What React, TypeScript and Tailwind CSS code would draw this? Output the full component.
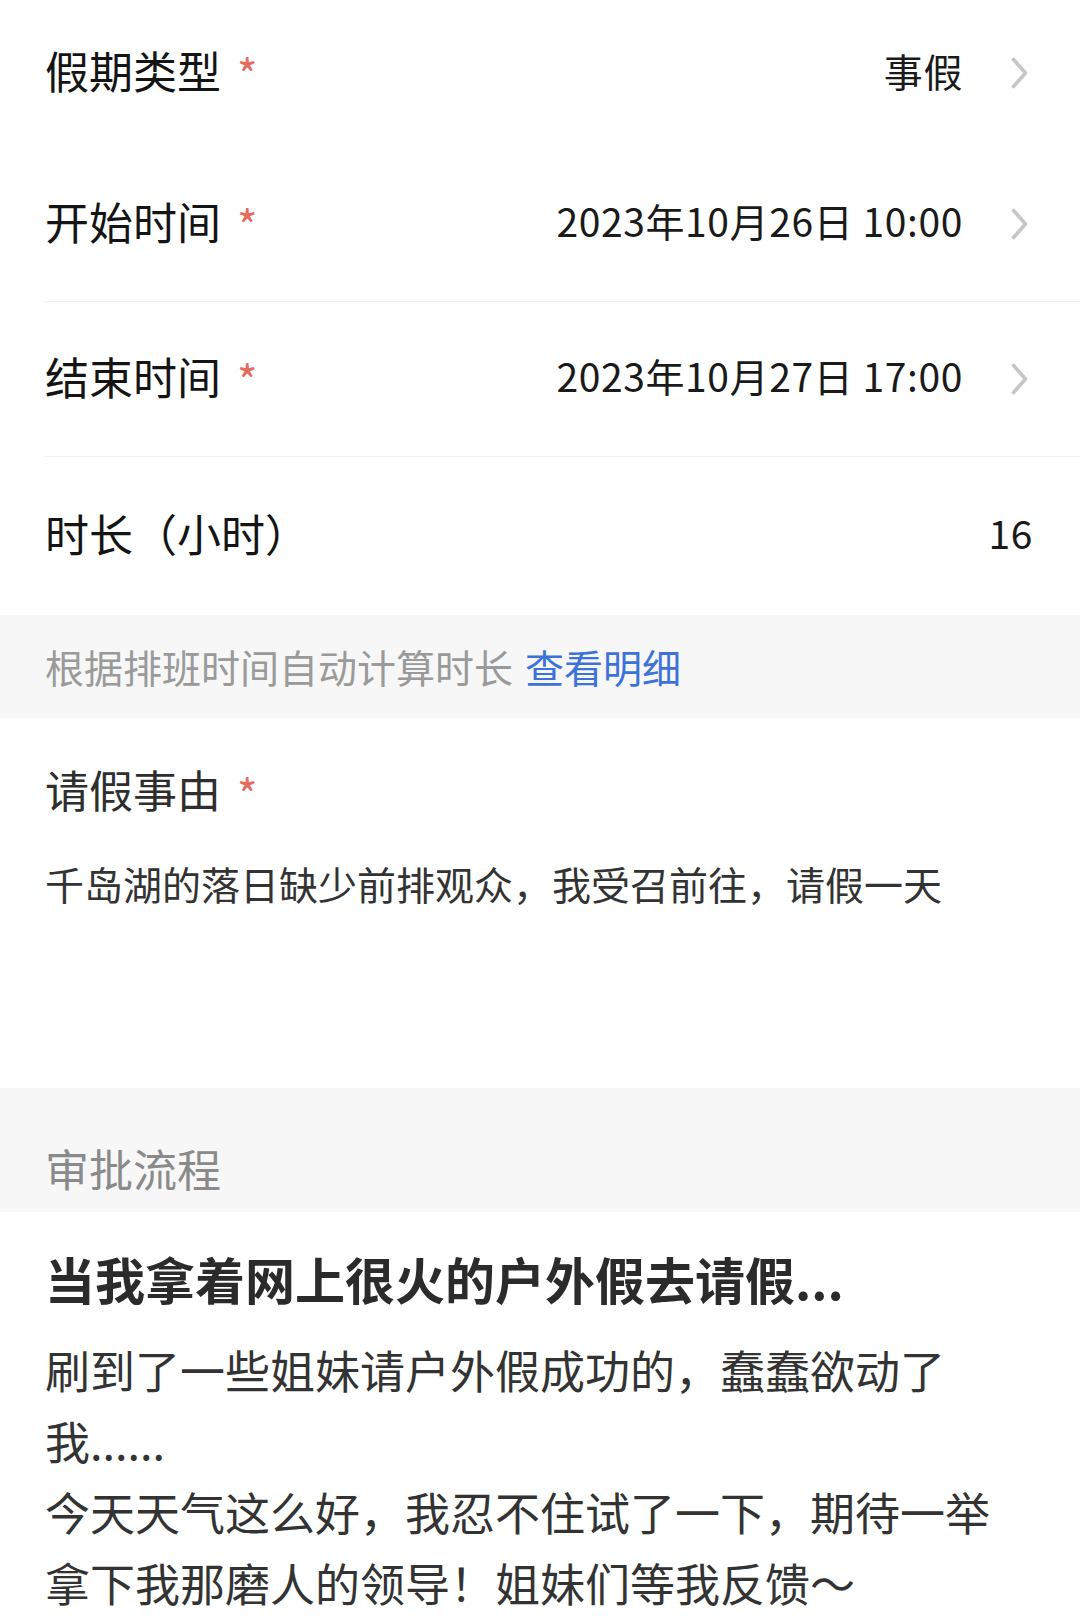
const Chevron = () => (
  <svg width="17" height="32" viewBox="0 0 17 32" fill="none" className="ml-[48px] shrink-0 translate-y-[3px]">
    <polyline points="2.5,2.5 14.5,16 2.5,29.5" stroke="#c6c6c6" strokeWidth="3.6" strokeLinecap="round" strokeLinejoin="round" />
  </svg>
);

const Star = () => (
  <span className="relative top-[3px] ml-[16px] text-[44px] leading-none text-[#e66a5e]">*</span>
);

type RowProps = {
  label: string;
  value: string;
  required?: boolean;
  arrow?: boolean;
  divider?: boolean;
  height: string;
};

const FormRow = ({ label, value, required, arrow, divider, height }: RowProps) => (
  <div className={`ml-[45px] flex items-center pb-[7px] ${height} ${divider ? "border-b border-[#f1f1f1]" : ""} ${arrow ? "pr-[52px]" : "pr-[47px]"}`}>
    <div className="flex items-center text-[44px] text-[#141414]">
      <span>{label}</span>
      {required && <Star />}
    </div>
    <div className="flex-1" />
    <span className="text-[39px] tracking-[0.6px] text-[#1a1a1a]">{value}</span>
    {arrow && <Chevron />}
  </div>
);

export default function App() {
  return (
    <div className="min-h-screen w-[1080px] bg-white font-['Noto_Sans_CJK_SC','Noto_Sans',sans-serif]">
      <FormRow label="假期类型" value="事假" required arrow height="h-[147px]" />
      <FormRow label="开始时间" value="2023年10月26日 10:00" required arrow divider height="h-[155px]" />
      <FormRow label="结束时间" value="2023年10月27日 17:00" required arrow divider height="h-[155px]" />
      <FormRow label="时长（小时）" value="16" height="h-[158px]" />

      {/* hint band */}
      <div className="flex h-[103px] items-center bg-[#f7f7f7] pl-[45px] text-[39px] text-[#9a9a9a]">
        <span>根据排班时间自动计算时长</span>
        <span className="ml-[12px] text-[#3c72d9]">查看明细</span>
      </div>

      {/* reason */}
      <div className="h-[370px] pl-[45px] pt-[42px]">
        <div className="flex items-center text-[44px] leading-[59px] text-[#2e2e2e]">
          <span>请假事由</span>
          <Star />
        </div>
        <p className="mt-[37px] text-[39px] leading-[55px] text-[#333333]">
          千岛湖的落日缺少前排观众，我受召前往，请假一天
        </p>
      </div>

      {/* approval header */}
      <div className="h-[124px] bg-[#f7f7f7] pl-[45px] pt-[51px] text-[44px] leading-[59px] text-[#8a8a8a]">
        审批流程
      </div>

      {/* article */}
      <div className="pl-[45px] pt-[31px]">
        <h2 className="text-[50px] font-bold leading-[71px] text-[#2b2b2b]">
          当我拿着网上很火的户外假去请假...
        </h2>
        <div className="mt-[20px] text-[45px] leading-[71px] text-[#333333]">
          <p className="whitespace-nowrap">刷到了一些姐妹请户外假成功的，蠢蠢欲动了</p>
          <p className="whitespace-nowrap">我......</p>
          <p className="whitespace-nowrap">今天天气这么好，我忍不住试了一下，期待一举</p>
          <p className="whitespace-nowrap">拿下我那磨人的领导！姐妹们等我反馈～</p>
        </div>
      </div>
    </div>
  );
}
